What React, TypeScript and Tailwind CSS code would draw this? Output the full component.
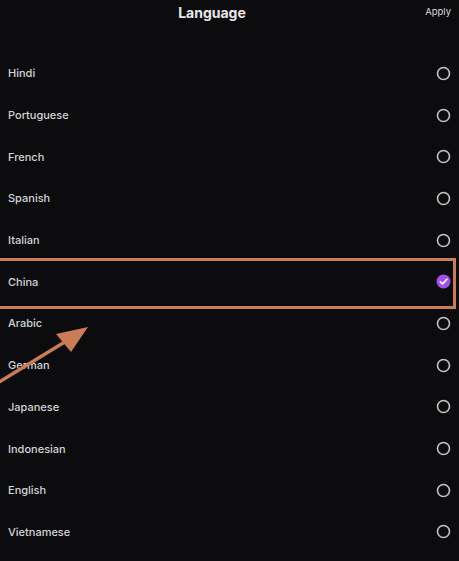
import React from "react";

const LANGS = [
  "Hindi",
  "Portuguese",
  "French",
  "Spanish",
  "Italian",
  "China",
  "Arabic",
  "German",
  "Japanese",
  "Indonesian",
  "English",
  "Vietnamese",
];

const SELECTED = "China";

function Radio({ on }: { on: boolean }) {
  if (on) {
    return (
      <svg width="15" height="15" viewBox="0 0 15 15">
        <circle cx="7.5" cy="7.5" r="7" fill="#a24ee8" />
        <path d="M4.3 7.8 L6.6 9.9 L10.9 5.2" stroke="#fff" strokeWidth="1.6" fill="none" strokeLinecap="round" strokeLinejoin="round" />
      </svg>
    );
  }
  return (
    <svg width="15" height="15" viewBox="0 0 15 15">
      <circle cx="7.5" cy="7.5" r="6" stroke="#c4c4c4" strokeWidth="1.6" fill="none" />
    </svg>
  );
}

export default function App() {
  return (
    <div
      className="relative w-[459px] h-[561px] overflow-hidden bg-[#0c0c0f] text-[#d4d4d6]"
      style={{ fontFamily: "Inter, 'Noto Sans', Arial, sans-serif" }}
    >
      {/* header */}
      <div className="relative h-[52.5px] flex justify-center pt-[4px] pr-[35px]">
        <span className="text-[14px] leading-[17px] font-bold text-[#e8e8ea]">Language</span>
        <span className="absolute right-[8px] top-[6px] text-[9.5px] leading-[12px] text-[#d8d8da]">Apply</span>
      </div>

      {/* list */}
      <div className="flex flex-col">
        {LANGS.map((l) => (
          <div key={l} className="h-[41.7px] flex items-center justify-between pl-[8px] pr-[8px]">
            <span className="text-[11px] leading-[14px] font-medium">{l}</span>
            <Radio on={l === SELECTED} />
          </div>
        ))}
      </div>

      {/* annotation box */}
      <div className="absolute left-[-6px] top-[258px] w-[462px] h-[51px] border-[3px] border-[#c97c55]" />

      {/* annotation arrow */}
      <svg className="absolute left-0 top-0" width="459" height="561" viewBox="0 0 459 561">
        <line x1="-4" y1="384" x2="68" y2="340" stroke="#c97c55" strokeWidth="3.5" />
        <polygon points="88,327 56,334 71,352" fill="#c97c55" />
      </svg>
    </div>
  );
}
